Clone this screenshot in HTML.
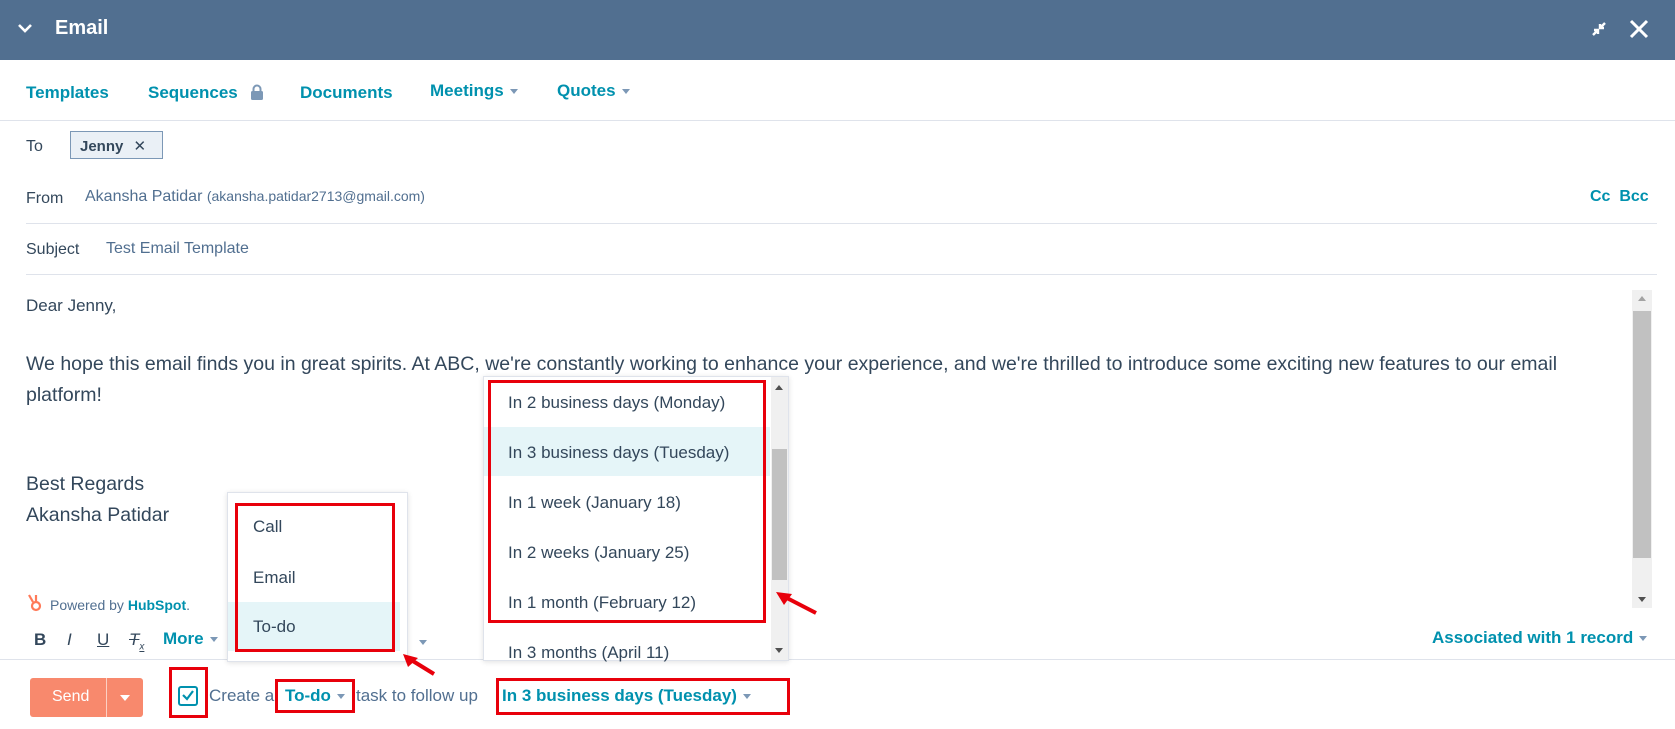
<!DOCTYPE html>
<html><head><style>
*{margin:0;padding:0;box-sizing:border-box}
body{width:1675px;height:729px;position:relative;overflow:hidden;background:#fff;font-family:"Liberation Sans",sans-serif;color:#33475b}
.a{position:absolute;white-space:nowrap}
.teal{color:#0091ae;font-weight:bold}
.hr{position:absolute;height:1px;background:#dfe3eb}
.red{position:absolute;border:3px solid #e8000b}
.caret{display:inline-block;width:0;height:0;border-left:4px solid transparent;border-right:4px solid transparent;border-top:5px solid #7c98b6;vertical-align:middle;margin-left:6px}
</style></head><body>
<div class="a" style="left:0;top:0;width:1675px;height:60px;background:#516f90"></div>
<svg class="a" style="left:16px;top:22px" width="18" height="14"><path d="M3 3 L9 9 L15 3" stroke="#fff" stroke-width="2.6" fill="none"/></svg>
<div class="a" style="left:55px;top:17px;font-size:20px;font-weight:bold;color:#fff">Email</div>
<svg class="a" style="left:1589px;top:19px" width="20" height="20"><path d="M4 16 L9 11 M5 11 H9 V15 M16 4 L11 9 M11 5 V9 H15" stroke="#fff" stroke-width="2.4" fill="none"/></svg>
<svg class="a" style="left:1628px;top:18px" width="22" height="22"><path d="M3 3 L19 19 M19 3 L3 19" stroke="#fff" stroke-width="3" fill="none"/></svg>

<div class="a teal" style="left:26px;top:83px;font-size:17px">Templates</div>
<div class="a teal" style="left:148px;top:83px;font-size:17px">Sequences</div>
<svg class="a" style="left:250px;top:84px" width="14" height="16"><path d="M3.5 7 V5 a3.5 3.5 0 0 1 7 0 V7" stroke="#7c98b6" stroke-width="2" fill="none"/><rect x="1" y="7" width="12" height="9" rx="1.5" fill="#7c98b6"/></svg>
<div class="a teal" style="left:300px;top:83px;font-size:17px">Documents</div>
<div class="a teal" style="left:430px;top:81px;font-size:17px">Meetings<span class="caret"></span></div>
<div class="a teal" style="left:557px;top:81px;font-size:17px">Quotes<span class="caret"></span></div>
<div class="hr" style="left:0;top:120px;width:1675px"></div>

<div class="a" style="left:26px;top:138px;font-size:16px">To</div>
<div class="a" style="left:70px;top:131px;width:93px;height:28px;border:1px solid #7c98b6;background:#eaf0f6;font-size:15px;font-weight:bold;padding:5px 9px">Jenny <span style="font-weight:normal;margin-left:6px">✕</span></div>
<div class="a" style="left:26px;top:190px;font-size:16px">From</div>
<div class="a" style="left:85px;top:188px;font-size:16px;color:#516f90">Akansha Patidar <span style="font-size:14px">(akansha.patidar2713@gmail.com)</span></div>
<div class="a teal" style="left:1590px;top:188px;font-size:16px">Cc&nbsp; Bcc</div>
<div class="hr" style="left:26px;top:223px;width:1631px"></div>
<div class="a" style="left:26px;top:241px;font-size:16px">Subject</div>
<div class="a" style="left:106px;top:240px;font-size:16px;color:#516f90">Test Email Template</div>
<div class="hr" style="left:26px;top:274px;width:1631px"></div>

<div class="a" style="left:26px;top:296px;font-size:17px">Dear Jenny,</div>
<div class="a" style="left:26px;top:349px;font-size:19.5px;line-height:31px;white-space:normal;width:1600px">We hope this email finds you in great spirits. At ABC, we're constantly working to enhance your experience, and we're thrilled to introduce some exciting new features to our email platform!</div>
<div class="a" style="left:26px;top:469px;font-size:19.5px;line-height:31px">Best Regards<br>Akansha Patidar</div>
<div class="a" style="left:1632px;top:290px;width:20px;height:318px;background:#f0f0f0"></div>
<div class="a" style="left:1633px;top:311px;width:18px;height:247px;background:#c1c1c1"></div>
<div class="a" style="left:1638px;top:296px;border-left:4px solid transparent;border-right:4px solid transparent;border-bottom:5px solid #a3a3a3"></div>
<div class="a" style="left:1638px;top:597px;border-left:4px solid transparent;border-right:4px solid transparent;border-top:5px solid #505050"></div>

<svg class="a" style="left:26px;top:593px" width="18" height="20"><circle cx="10" cy="13" r="4" stroke="#ff7a59" stroke-width="2.2" fill="none"/><path d="M3 2 L7 9 M10 2 V9" stroke="#ff7a59" stroke-width="2.2"/></svg>
<div class="a" style="left:50px;top:597px;font-size:14px;color:#516f90">Powered by <b style="color:#0091ae">HubSpot</b>.</div>
<div class="a" style="left:34px;top:630px;font-size:17px;font-weight:bold">B</div>
<div class="a" style="left:67px;top:630px;font-size:17px;font-style:italic">I</div>
<div class="a" style="left:97px;top:630px;font-size:17px;text-decoration:underline">U</div>
<div class="a" style="left:129px;top:630px;font-size:17px;font-style:italic;text-decoration:line-through">T<sub style="font-size:10px">x</sub></div>
<div class="a teal" style="left:163px;top:629px;font-size:17px">More<span class="caret"></span></div>
<div class="a" style="left:413px;top:634px" ><span class="caret"></span></div>
<div class="a teal" style="left:1432px;top:628px;font-size:17px">Associated with 1 record<span class="caret"></span></div>
<div class="hr" style="left:0;top:659px;width:1675px"></div>

<div class="a" style="left:30px;top:678px;width:113px;height:39px;background:#f8896d;border-radius:3px"></div>
<div class="a" style="left:106px;top:678px;width:1px;height:39px;background:#fff;opacity:.6"></div>
<div class="a" style="left:52px;top:688px;font-size:16px;color:#fff">Send</div>
<div class="a" style="left:120px;top:695px;border-left:5px solid transparent;border-right:5px solid transparent;border-top:6px solid #fff"></div>
<div class="a" style="left:178px;top:686px;width:20px;height:20px;border:2px solid #0091ae;border-radius:3px"></div>
<svg class="a" style="left:181px;top:688px" width="14" height="14"><path d="M2 7 L6 11 L12 3" stroke="#0091ae" stroke-width="2.2" fill="none"/></svg>
<div class="a" style="left:209px;top:686px;font-size:17px;color:#516f90">Create a</div>
<div class="a teal" style="left:285px;top:686px;font-size:17px">To-do<span class="caret"></span></div>
<div class="a" style="left:356px;top:686px;font-size:17px;color:#516f90">task to follow up</div>
<div class="a teal" style="left:502px;top:686px;font-size:17px">In 3 business days (Tuesday)<span class="caret"></span></div>

<!-- left dropdown -->
<div class="a" style="left:227px;top:492px;width:181px;height:170px;background:#fff;border:1px solid #dfe3eb;box-shadow:0 1px 5px rgba(0,0,0,.12)"></div>
<div class="a" style="left:228px;top:602px;width:172px;height:49px;background:#e5f5f8"></div>
<div class="a" style="left:253px;top:517px;font-size:17px">Call</div>
<div class="a" style="left:253px;top:568px;font-size:17px">Email</div>
<div class="a" style="left:253px;top:617px;font-size:17px">To-do</div>
<div class="red" style="left:235px;top:503px;width:160px;height:149px"></div>
<svg class="a" style="left:400px;top:652px" width="36" height="26"><path d="M34 22 L8 6" stroke="#e8000b" stroke-width="4"/><path d="M3 2 L18 6 L8 15 Z" fill="#e8000b"/></svg>

<!-- right dropdown -->
<div class="a" style="left:483px;top:376px;width:306px;height:285px;background:#fff;border:1px solid #dfe3eb;box-shadow:0 1px 5px rgba(0,0,0,.12)"></div>
<div class="a" style="left:484px;top:427px;width:286px;height:49px;background:#e5f5f8"></div>
<div class="a" style="left:771px;top:377px;width:17px;height:283px;background:#f0f0f0"></div>
<div class="a" style="left:772px;top:449px;width:15px;height:131px;background:#c1c1c1"></div>
<div class="a" style="left:775px;top:385px;border-left:4px solid transparent;border-right:4px solid transparent;border-bottom:5px solid #505050"></div>
<div class="a" style="left:775px;top:648px;border-left:4px solid transparent;border-right:4px solid transparent;border-top:5px solid #505050"></div>
<div class="a" style="left:508px;top:393px;font-size:17px">In 2 business days (Monday)</div>
<div class="a" style="left:508px;top:443px;font-size:17px">In 3 business days (Tuesday)</div>
<div class="a" style="left:508px;top:493px;font-size:17px">In 1 week (January 18)</div>
<div class="a" style="left:508px;top:543px;font-size:17px">In 2 weeks (January 25)</div>
<div class="a" style="left:508px;top:593px;font-size:17px">In 1 month (February 12)</div>
<div class="a" style="left:508px;top:643px;font-size:17px">In 3 months (April 11)</div>
<div class="red" style="left:488px;top:380px;width:278px;height:243px"></div>
<svg class="a" style="left:773px;top:590px" width="46" height="28"><path d="M43 23 L10 6" stroke="#e8000b" stroke-width="4"/><path d="M3 2 L19 4 L11 15 Z" fill="#e8000b"/></svg>

<div class="red" style="left:169px;top:667px;width:39px;height:51px"></div>
<div class="red" style="left:275px;top:679px;width:80px;height:34px"></div>
<div class="red" style="left:496px;top:678px;width:294px;height:37px"></div>
</body></html>
